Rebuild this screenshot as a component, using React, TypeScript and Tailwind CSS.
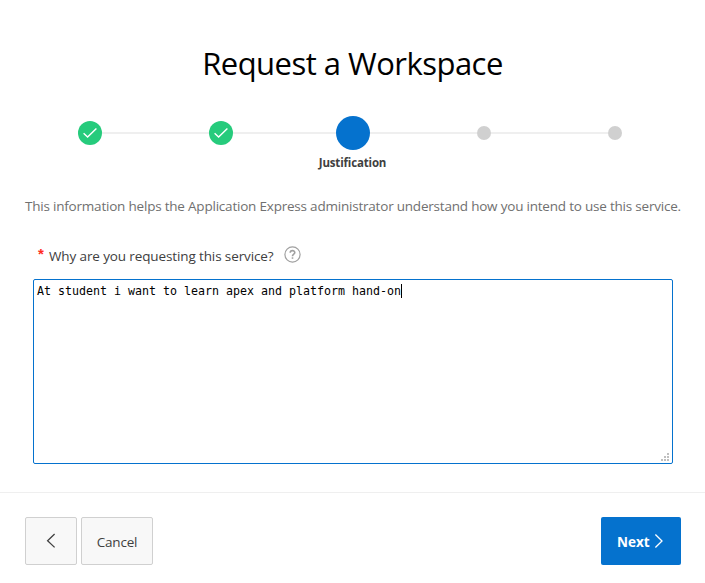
import { useState } from "react";

type StepState = "done" | "current" | "pending";

const steps: { state: StepState; line: string }[] = [
  { state: "done", line: "w-[107px]" },
  { state: "done", line: "w-[103px]" },
  { state: "current", line: "w-[107px]" },
  { state: "pending", line: "w-[117px]" },
  { state: "pending", line: "" },
];

function StepMarker({ state }: { state: StepState }) {
  if (state === "done") {
    return (
      <span className="flex size-6 shrink-0 items-center justify-center rounded-full bg-[#26cb7c]">
        <svg width="24" height="24" viewBox="0 0 24 24" fill="none" stroke="#fff" strokeWidth="1.4">
          <path d="M5.6 12.2 L9.6 16 L18.4 7.4" />
        </svg>
      </span>
    );
  }
  if (state === "current") {
    return <span className="size-[34px] shrink-0 rounded-full bg-[#0572ce]" />;
  }
  return <span className="size-3.5 shrink-0 rounded-full bg-[#d0d0d0]" />;
}

export default function App() {
  const [reason] = useState("At student i want to learn apex and platform hand-on");
  return (
    <div className="h-[583px] w-[705px] overflow-hidden bg-white font-['Open_Sans','Noto_Sans',sans-serif] text-[#404040]">
      <h1 className="pt-[43px] text-center text-[31px] leading-[40px] tracking-[-0.52px] whitespace-nowrap text-black">
        Request a Workspace
      </h1>

      <div className="mt-[33px] flex h-[34px] items-center pl-[78px]">
        {steps.map((step, i) => (
          <div key={i} className="flex items-center">
            <StepMarker state={step.state} />
            {step.line && <span className={"h-0.5 bg-[#efefef] " + step.line} />}
          </div>
        ))}
      </div>
      <div className="mt-[5px] text-center text-[11.5px] leading-4 font-bold tracking-[-0.16px] whitespace-nowrap">
        Justification
      </div>

      <p className="mt-[25px] pl-[25px] text-[13.5px] leading-5 tracking-[-0.21px] whitespace-nowrap text-[#707070]">
        This information helps the Application Express administrator understand how you intend to use this service.
      </p>

      <div className="mt-[30px] flex h-5 items-center pl-[38px]">
        <span className="w-[11px] pb-1 font-['Liberation_Sans',sans-serif] text-[15px] leading-4 font-bold text-[#ff2d1f]">*</span>
        <label className="w-[235px] text-[13.5px] leading-5 tracking-[-0.12px] whitespace-nowrap">
          Why are you requesting this service?
        </label>
        <svg className="mb-[3px]" width="17" height="17" viewBox="0 0 17 17" fill="none" stroke="#a0a0a0">
          <circle cx="8.5" cy="8.5" r="7.6" strokeWidth="1.2" />
          <path d="M6.2 6.8 C6.2 3.9 10.8 3.9 10.8 6.6 C10.8 8.3 8.5 8.1 8.5 10.2" strokeWidth="1.6" />
          <path d="M8.5 11.3 V12.8" strokeWidth="1.6" />
        </svg>
      </div>

      <div className="mt-[13px] ml-[33px] flex h-[185px] w-[640px] flex-col justify-between rounded-[2px] border border-[#0572ce] pt-[3px] pl-[3px]">
        <div className="flex h-4 items-center font-['DejaVu_Sans_Mono',monospace] text-[11.63px] leading-4 whitespace-pre text-black">
          {reason}
          <span className="h-[14px] w-px bg-black" />
        </div>
        <svg className="self-end" width="12" height="13" viewBox="0 0 12 13" fill="#bfbfbf" shapeRendering="crispEdges">
          <path d="M7 3h2v2h-2z M4 6h2v2h-2z M7 6h2v2h-2z M1 9h2v2h-2z M4 9h2v2h-2z M7 9h2v2h-2z" />
        </svg>
      </div>

      <div className="mt-7 flex items-start border-t border-[#efefef] pt-6 pr-6 pl-[25px]">
        <button className="flex h-12 w-[52px] items-center justify-center rounded-[2px] border border-[#d0d0d0] bg-[#f8f8f8]">
          <svg width="16" height="16" viewBox="0 0 16 16" fill="none" stroke="#404040" strokeWidth="1.3">
            <path d="M11.6 1 L4.6 7.7 L11.6 14.4" />
          </svg>
        </button>
        <button className="ml-1 flex h-12 w-[72px] items-center justify-center rounded-[2px] border border-[#d0d0d0] bg-[#f8f8f8] pt-[3px] text-[13.5px] tracking-[-0.2px]">
          Cancel
        </button>
        <button className="ml-auto flex h-12 w-20 items-center rounded-[2px] bg-[#0572ce] pl-4 text-[13.5px] font-bold text-white">
          <span className="w-[34px] pt-[3px] text-left">Next</span>
          <svg width="16" height="16" viewBox="0 0 16 16" fill="none" stroke="#fff" strokeWidth="1.3">
            <path d="M4.4 1.5 L11 8 L4.4 14.5" />
          </svg>
        </button>
      </div>
    </div>
  );
}
